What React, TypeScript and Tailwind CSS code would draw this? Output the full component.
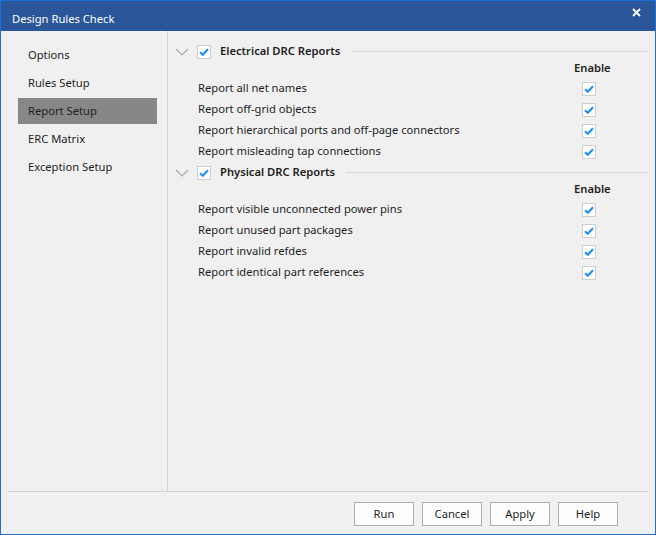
import React from "react";

const FONT = { fontFamily: '"Noto Sans", "Open Sans", Arial, sans-serif' };

function Check() {
  return (
    <div className="w-[14px] h-[14px] bg-white border border-[#cfcfcf] flex items-center justify-center shrink-0">
      <svg width="10" height="8" viewBox="0 0 10 8">
        <path d="M1 4.2 L3.8 6.8 L9 1.2" stroke="#1a8cff" strokeWidth="2" fill="none" />
      </svg>
    </div>
  );
}

function Chevron() {
  return (
    <svg width="14" height="8" viewBox="0 0 14 8" className="shrink-0">
      <path d="M1 1 L7 7 L13 1" stroke="#a9a9a9" strokeWidth="1.2" fill="none" />
    </svg>
  );
}

function Section({ title, rows }: { title: string; rows: string[] }) {
  return (
    <div>
      <div className="h-[21px] flex items-center pl-[7px]">
        <Chevron />
        <div className="ml-[8px]">
          <Check />
        </div>
        <div className="ml-[9px] font-semibold text-[#1e1e1e] whitespace-nowrap">{title}</div>
        <div className="flex-1 ml-[11px] h-px bg-[#d5d5d5]" />
      </div>
      <div className="h-[16px] leading-[12px] pl-[406px] font-semibold text-[#1e1e1e]">Enable</div>
      {rows.map((r) => (
        <div key={r} className="h-[21px] grid grid-cols-[384px_14px] items-center pl-[30px]">
          <div className="text-[#1e1e1e] whitespace-nowrap">{r}</div>
          <Check />
        </div>
      ))}
    </div>
  );
}

export default function App() {
  const items = ["Options", "Rules Setup", "Report Setup", "ERC Matrix", "Exception Setup"];
  return (
    <div
      style={FONT}
      className="w-[656px] h-[535px] border border-[#1d6fd8] bg-[#f0f0f0] flex flex-col text-[11.2px] overflow-hidden"
    >
      <div className="h-[30px] bg-[#2b579a] flex items-start justify-between pl-[11px] pr-[14px] shrink-0">
        <span className="text-white text-[11.2px] mt-[10px] leading-[15px]">Design Rules Check</span>
        <svg width="9" height="9" viewBox="0 0 9 9" className="mt-[7px]">
          <path d="M1 1 L8 8 M8 1 L1 8" stroke="white" strokeWidth="1.8" />
        </svg>
      </div>
      <div className="flex-1 flex flex-col px-[7px]">
        <div className="flex h-[461px] border-b border-[#d2d2d2]">
          <div className="w-[160px] border-r border-[#d2d2d2] pt-[10px] px-[10px]">
            {items.map((it) => (
              <div key={it} className="h-[28px] pt-[1px]">
                <div
                  className={`h-[26px] flex items-center pl-[10px] text-[#1e1e1e] ${
                    it === "Report Setup" ? "bg-[#878787]" : ""
                  }`}
                >
                  {it}
                </div>
              </div>
            ))}
          </div>
          <div className="flex-1 pt-[10px]">
            <Section
              title="Electrical DRC Reports"
              rows={[
                "Report all net names",
                "Report off-grid objects",
                "Report hierarchical ports and off-page connectors",
                "Report misleading tap connections",
              ]}
            />
            <Section
              title="Physical DRC Reports"
              rows={[
                "Report visible unconnected power pins",
                "Report unused part packages",
                "Report invalid refdes",
                "Report identical part references",
              ]}
            />
          </div>
        </div>
        <div className="flex justify-end gap-[8px] pt-[10px] pr-[30px]">
          {["Run", "Cancel", "Apply", "Help"].map((b) => (
            <div
              key={b}
              className="w-[60px] h-[24px] border border-[#adadad] bg-[#fdfdfd] flex items-center justify-center text-[#1e1e1e]"
            >
              {b}
            </div>
          ))}
        </div>
      </div>
    </div>
  );
}
